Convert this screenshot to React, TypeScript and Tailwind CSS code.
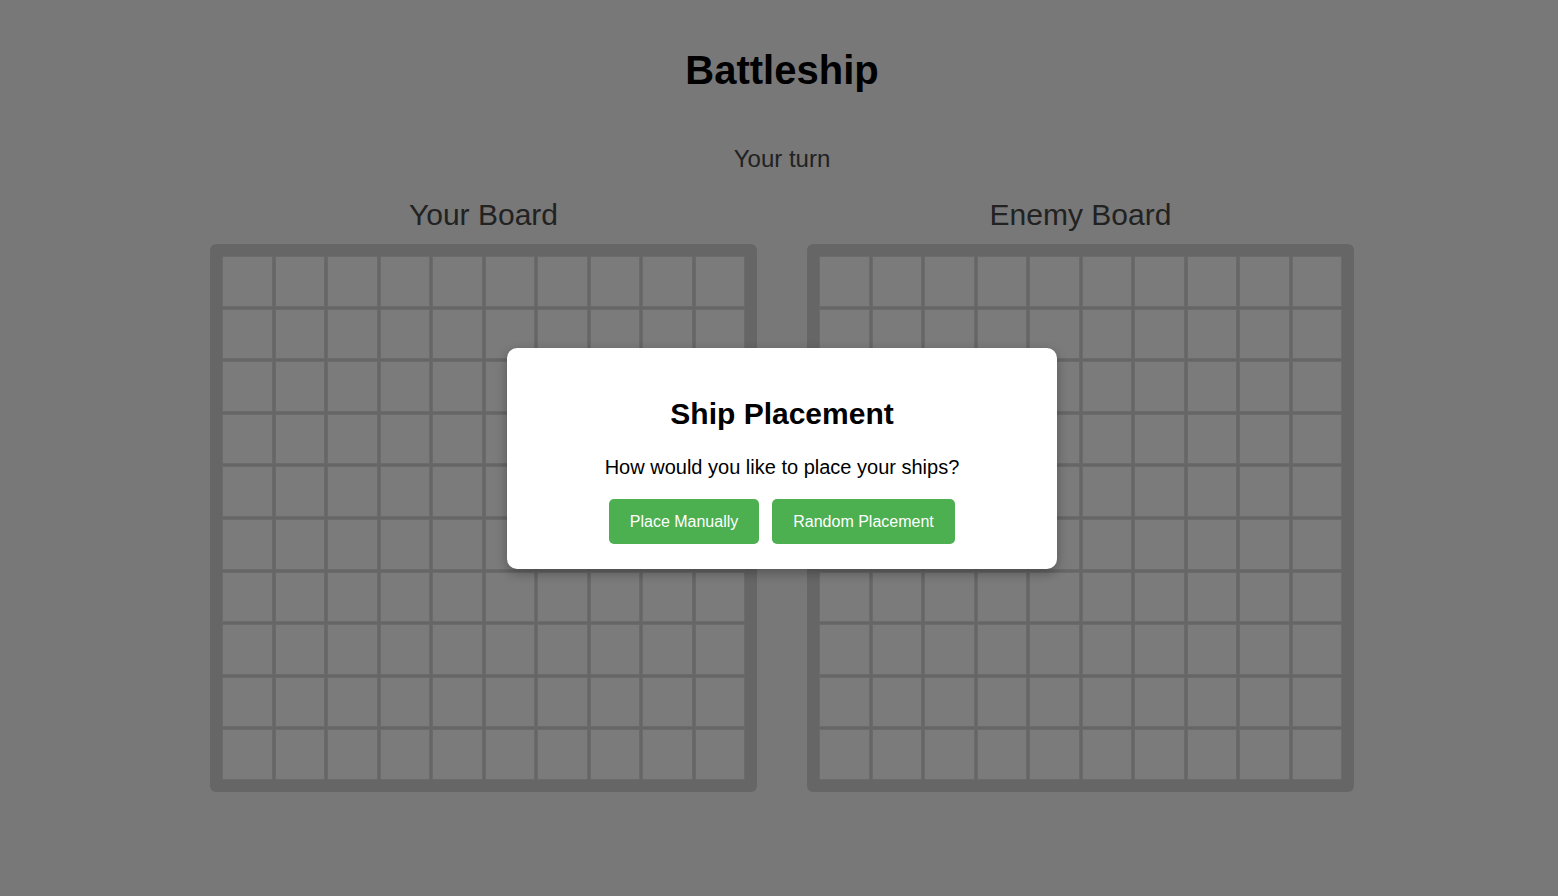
const cells = Array.from({ length: 100 });

function Board({ title }: { title: string }) {
  return (
    <div className="flex flex-col items-center">
      <h2 className="mb-[11px] text-[30px] leading-[36px] font-normal text-[#444]">{title}</h2>
      <div className="grid h-[548px] w-[547px] grid-cols-10 grid-rows-10 gap-[2px] rounded-[6px] bg-[#cdcdcd] p-3">
        {cells.map((_, i) => (
          <div key={i} className="border border-[#d6d6d6] bg-[#f6f6f6]" />
        ))}
      </div>
    </div>
  );
}

export default function App() {
  return (
    <div className="relative min-h-[896px] w-full bg-[#f0f0f0] font-['Liberation_Sans',Arial,sans-serif]">
      <main className="flex flex-col items-center pl-[6px] pt-[46px]">
        <h1 className="text-[40px] leading-[48px] font-bold text-black">Battleship</h1>
        <p className="mt-[51px] text-[24px] leading-[28px] text-[#444]">Your turn</p>
        <div className="mt-[24px] flex gap-[50px]">
          <Board title="Your Board" />
          <Board title="Enemy Board" />
        </div>
      </main>

      <div className="absolute inset-0 flex justify-center bg-black/50 pl-[6px] pt-[348px]">
        <div className="flex h-[221px] w-[550px] flex-col items-center rounded-[10px] bg-white p-[25px] shadow-[0_4px_12px_rgba(0,0,0,0.3)]">
          <h2 className="mt-[23px] text-[30px] leading-[36px] font-bold text-black">Ship Placement</h2>
          <p className="mt-[23px] text-[20px] leading-[24px] text-black">How would you like to place your ships?</p>
          <div className="mt-[20px] flex gap-[13px]">
            <button className="h-[45px] w-[150px] rounded-[5px] bg-[#4caf50] text-[16px] text-white">Place Manually</button>
            <button className="h-[45px] w-[183px] rounded-[5px] bg-[#4caf50] text-[16px] text-white">Random Placement</button>
          </div>
        </div>
      </div>
    </div>
  );
}
